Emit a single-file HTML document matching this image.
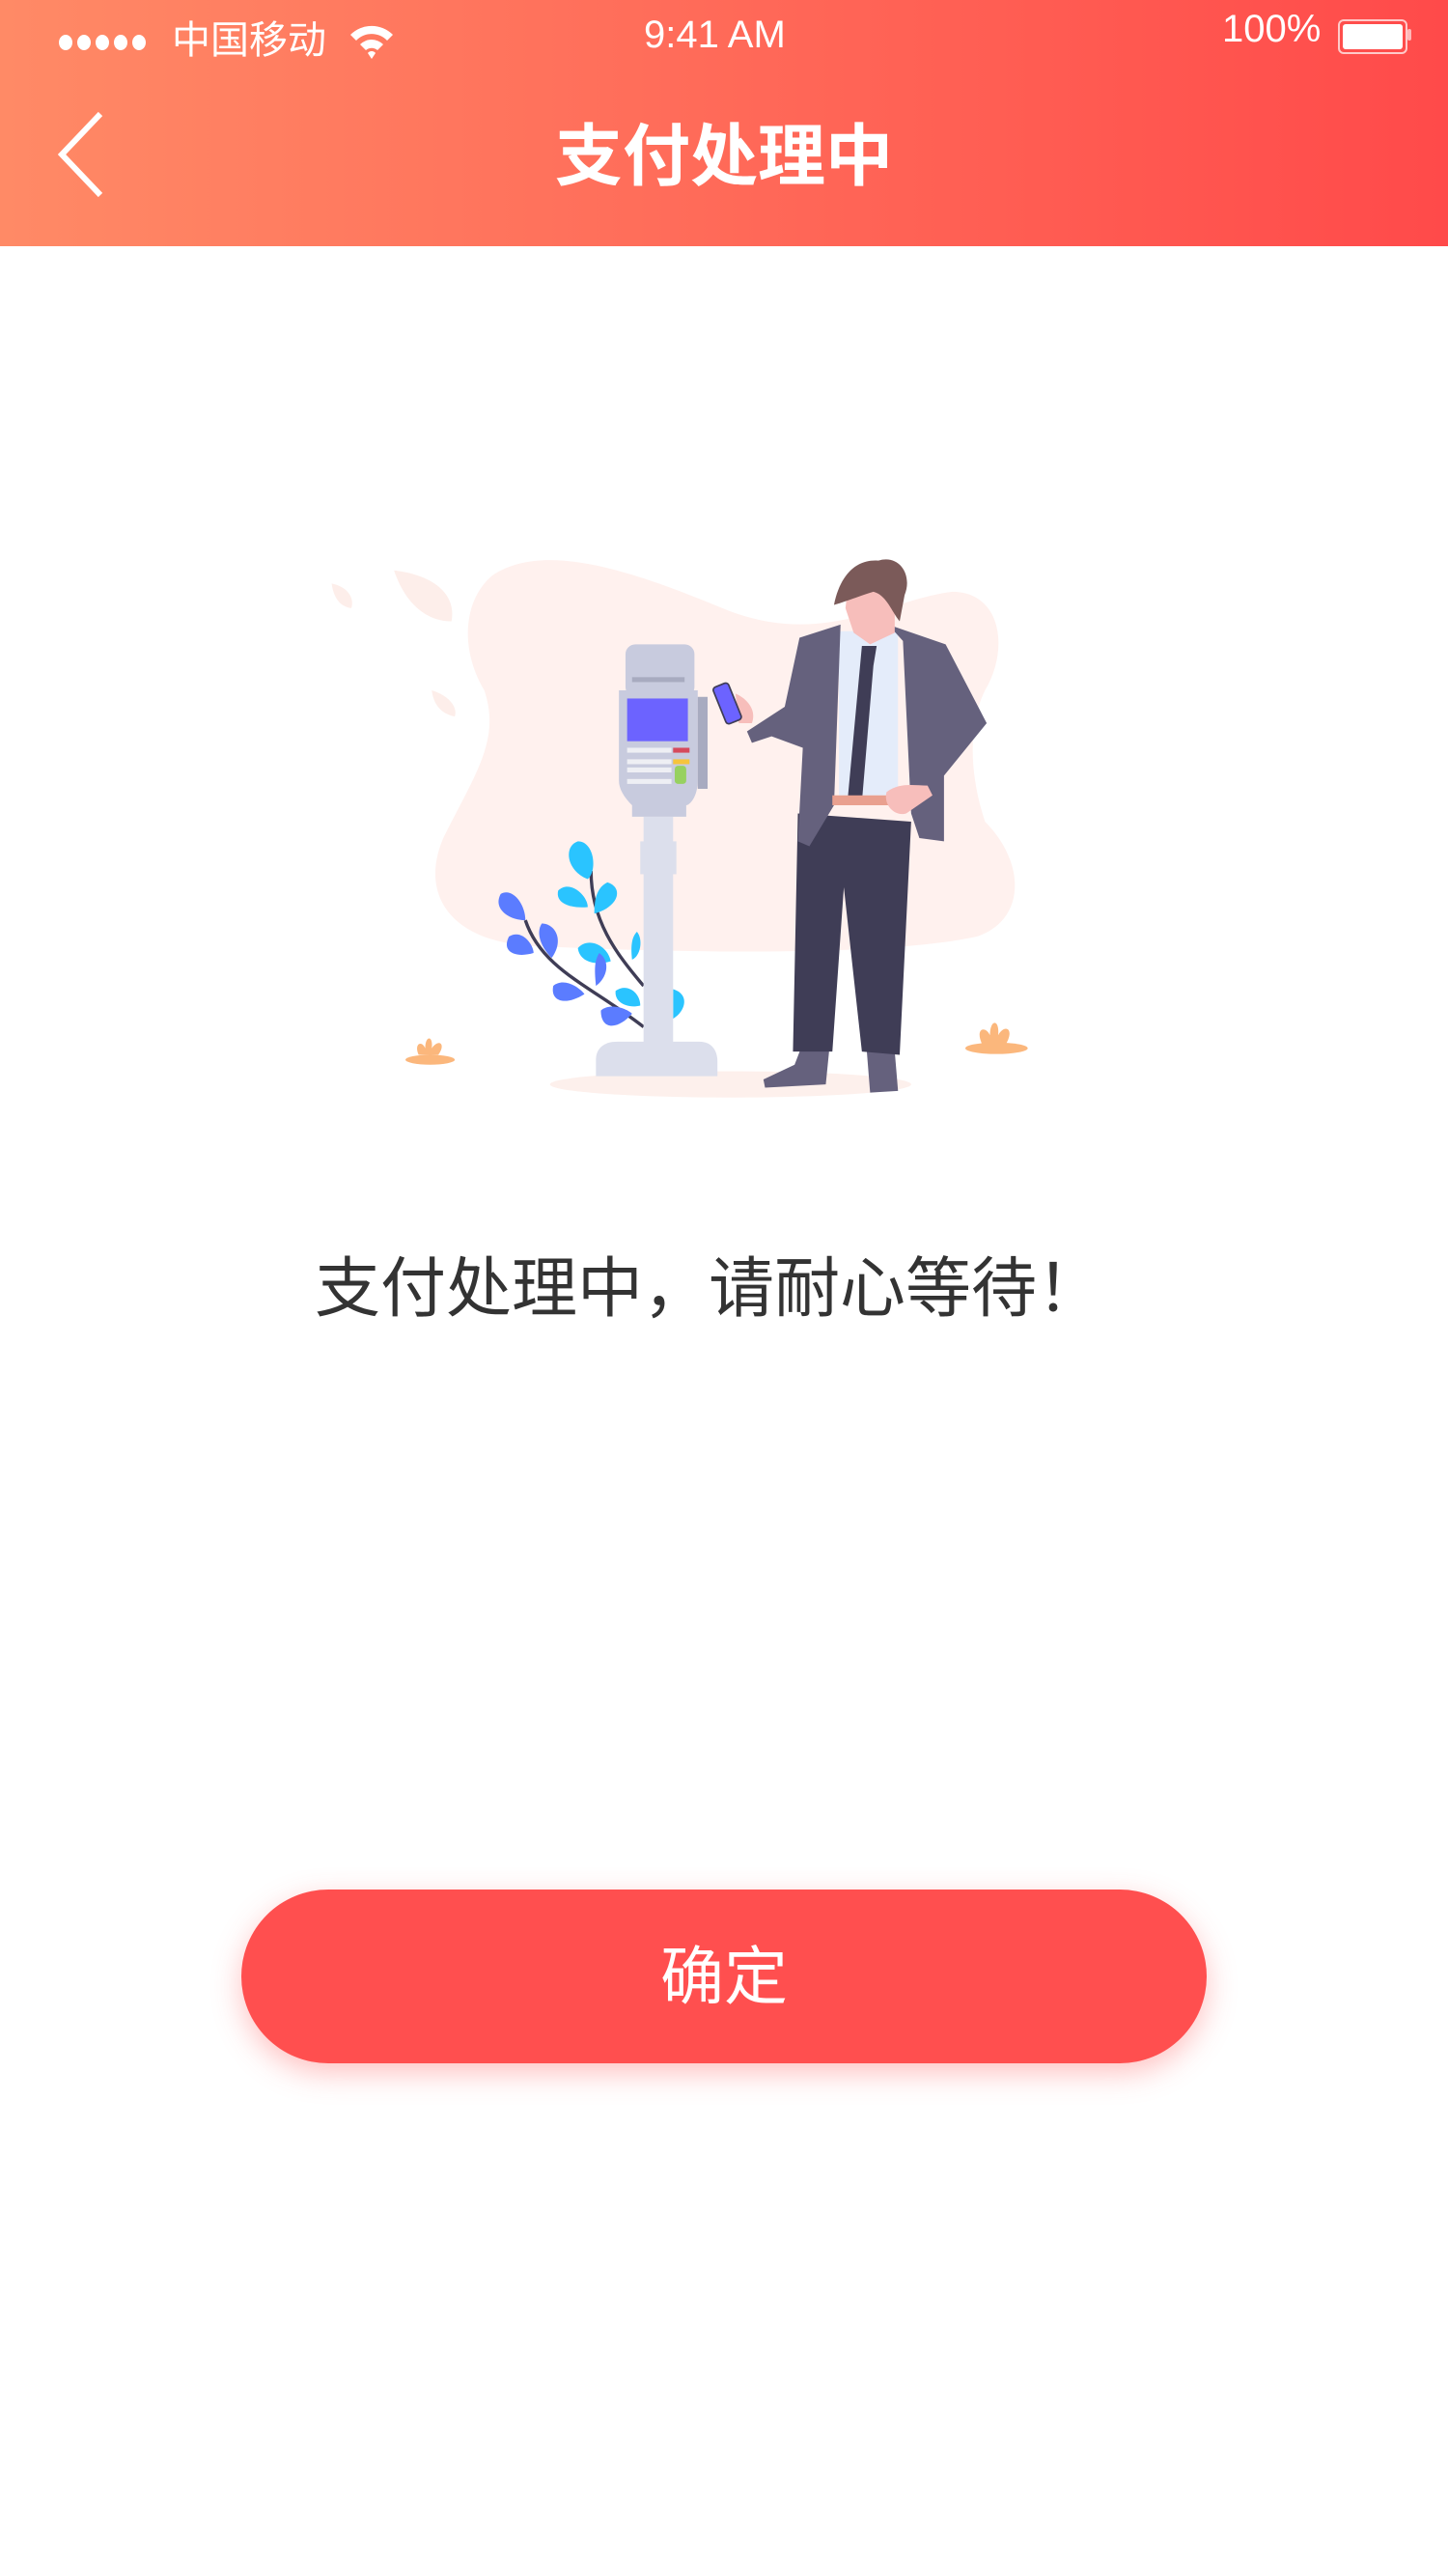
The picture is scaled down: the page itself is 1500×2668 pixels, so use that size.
<!DOCTYPE html>
<html><head><meta charset="utf-8">
<style>
html,body{margin:0;padding:0;}
body{width:1500px;height:2668px;position:relative;background:#fff;overflow:hidden;font-family:"Liberation Sans","Noto Sans CJK SC",sans-serif;}
.hdr{position:absolute;left:0;top:0;width:1500px;height:255px;background:linear-gradient(90deg,#ff8a66 0%,#ff6d5a 45%,#ff4a4a 100%);color:#fff;}
.sb{position:absolute;top:14px;font-size:40px;line-height:48px;}
.title{position:absolute;left:0;right:0;top:120px;text-align:center;font-size:70px;line-height:84px;font-weight:bold;}
.msg{position:absolute;left:0;width:1468px;top:1292px;text-align:center;font-size:68px;line-height:86px;color:#333;}
.btn{position:absolute;left:250px;top:1957px;width:1000px;height:180px;border-radius:90px;background:#ff4f4f;color:#fff;text-align:center;font-size:66px;line-height:180px;box-shadow:0 10px 30px rgba(255,79,79,0.35);}
</style></head><body>
<div class="hdr">
  <div class="sb" style="left:60px;top:22px;">
    <svg width="100" height="40" viewBox="0 0 100 40"><g fill="#fff"><ellipse cx="8" cy="22" rx="7" ry="8"/><ellipse cx="27" cy="22" rx="7" ry="8"/><ellipse cx="46" cy="22" rx="7" ry="8"/><ellipse cx="65" cy="22" rx="7" ry="8"/><ellipse cx="84" cy="22" rx="7" ry="8"/></g></svg>
  </div>
  <div class="sb" style="left:178px;top:18px;">中国移动</div>
  <svg style="position:absolute;left:360px;top:22px" width="50" height="40" viewBox="0 0 50 40"><path d="M3 14 A31 31 0 0 1 47 14 L41 20 A22 22 0 0 0 9 20Z" fill="#fff"/><path d="M13 24 A17 17 0 0 1 37 24 L31 30 A9 9 0 0 0 19 30Z" fill="#fff"/><path d="M21 33 L25 39 L29 33 A5 5 0 0 0 21 33Z" fill="#fff"/></svg>
  <div class="sb" style="left:667px;top:12px;">9:41 AM</div>
  <div class="sb" style="left:1266px;top:6px;">100%</div>
  <div style="position:absolute;left:1386px;top:20px;width:68px;height:32px;border:2px solid rgba(255,255,255,0.7);border-radius:6px;"></div>
  <div style="position:absolute;left:1391px;top:25px;width:62px;height:26px;background:#fff;border-radius:3px;"></div>
  <div style="position:absolute;left:1458px;top:30px;width:4px;height:12px;background:rgba(255,255,255,0.6);border-radius:2px;"></div>
  <svg style="position:absolute;left:56px;top:114px" width="56" height="92" viewBox="0 0 56 92"><path d="M48 4 L8 46 L48 88" fill="none" stroke="#fff" stroke-width="6"/></svg>
  <div class="title">支付处理中</div>
</div>

<svg style="position:absolute;left:0;top:0" width="1500" height="2668" viewBox="0 0 882 1568">
  <path d="M300 350 C330 330 380 345 440 370 C500 395 540 365 580 360 C610 360 615 395 600 420 C590 440 590 470 600 500 C625 525 625 560 595 570 C540 582 420 580 330 576 C275 575 255 545 270 510 C290 470 305 450 295 420 C280 395 282 365 300 350Z" fill="#fff1ee"/>
  <path d="M240 347 C265 350 278 362 275 378 C258 378 246 365 240 347Z" fill="#fdeeea"/>
  <path d="M202 355 C212 357 216 364 214 370 C206 369 203 362 202 355Z" fill="#fdeeea"/>
  <path d="M263 420 C273 423 279 430 277 436 C268 434 264 428 263 420Z" fill="#fdeeea"/>
  <ellipse cx="445" cy="660" rx="110" ry="8" fill="#fdf0ec"/>
  <ellipse cx="262" cy="645" rx="15" ry="3" fill="#fbb77c"/>
  <path d="M255 642 C252 635 257 633 259 638 C259 630 264 630 263 638 C267 632 272 635 267 642Z" fill="#fbb77c"/>
  <ellipse cx="607" cy="638" rx="19" ry="3.5" fill="#fbb77c"/>
  <path d="M598 635 C594 626 600 624 603 630 C603 620 609 620 608 630 C612 623 618 626 613 635Z" fill="#fbb77c"/>
  <g fill="none" stroke="#3f3d56" stroke-width="2"><path d="M360 530 C360 560 375 580 392 600"/><path d="M320 560 C330 590 360 600 392 625"/></g>
  <g fill="#2ac4ff">
    <path d="M352 512 C362 512 364 530 358 535 C345 530 343 515 352 512Z"/>
    <path d="M340 542 C347 535 358 545 358 552 C348 553 338 550 340 542Z"/>
    <path d="M370 537 C380 540 377 552 362 556 C362 546 364 540 370 537Z"/>
    <path d="M352 577 C358 570 370 575 372 585 C362 588 353 585 352 577Z"/>
    <path d="M388 567 C392 572 390 582 385 584 C384 575 385 570 388 567Z"/>
    <path d="M375 603 C382 598 390 604 390 612 C382 614 374 610 375 603Z"/>
    <path d="M410 602 C420 605 418 615 410 620Z"/>
  </g>
  <g fill="#5b7cff">
    <path d="M305 544 C312 540 320 550 320 560 C310 560 300 553 305 544Z"/>
    <path d="M310 570 C318 565 325 575 325 580 C315 583 305 580 310 570Z"/>
    <path d="M330 562 C338 562 344 572 336 583 C330 577 326 568 330 562Z"/>
    <path d="M337 600 C343 595 352 600 356 605 C345 612 335 610 337 600Z"/>
    <path d="M365 580 C372 585 370 595 363 600 C362 590 362 585 365 580Z"/>
    <path d="M366 615 C372 610 382 614 385 617 C376 627 366 627 366 615Z"/>
  </g>
  <rect x="392" y="497" width="18" height="140" fill="#dcdfec"/>
  <rect x="390" y="512" width="22" height="20" fill="#dcdfec"/>
  <path d="M363 655 L363 645 C363 638 368 634 376 634 L426 634 C434 634 437 640 437 646 L437 655Z" fill="#dcdfec"/>
  <rect x="381" y="392" width="42" height="32" rx="6" fill="#c8cbde"/>
  <path d="M377 420 L425 420 L425 475 C425 485 420 490 418 490 L418 497 L385 497 L385 490 C380 485 377 480 377 475Z" fill="#c8cbde"/>
  <rect x="425" y="424" width="6" height="56" fill="#a8abc0"/>
  <rect x="385" y="412" width="32" height="3" fill="#a8abc0"/>
  <rect x="382" y="425" width="37" height="26" fill="#6c63ff"/>
  <g fill="#eeeff4"><rect x="382" y="455" width="27" height="3"/><rect x="382" y="462" width="27" height="3"/><rect x="382" y="467" width="27" height="3"/><rect x="382" y="474" width="27" height="3"/></g>
  <rect x="410" y="455" width="10" height="3" fill="#d64a5c"/>
  <rect x="410" y="462" width="10" height="3" fill="#f6c43c"/>
  <rect x="411" y="466" width="7" height="11" rx="2" fill="#97d160"/>
  <path d="M489 635 L484 648 L465 657 L466 662 L503 660 L505 640Z" fill="#65617d"/>
  <path d="M528 640 L530 665 L547 664 L545 640Z" fill="#65617d"/>
  <path d="M486 495 L483 640 L507 640 L514 540 L525 640 L548 642 L555 500Z" fill="#3f3d56"/>
  <rect x="511" y="384" width="36" height="100" fill="#e4ecfa"/>
  <path d="M487 388 L512 380 L508 490 L493 515 L486 512 L489 455 L470 448 L458 452 L455 445 L478 430Z" fill="#65617d"/>
  <path d="M541 380 L576 392 L601 440 L575 472 L575 512 L560 510 L555 495 L550 390Z" fill="#65617d"/>
  <path d="M525 393 L534 393 L532 405 L525 488 L516 490Z" fill="#3f3d56"/>
  <path d="M507 484 L556 484 L556 490 L507 490Z" fill="#e9a08f"/>
  <path d="M540 482 C548 476 556 478 565 478 L568 484 L552 495 C545 497 538 490 540 482Z" fill="#f7bebb"/>
  <path d="M448 422 C455 425 461 432 458 440 L450 440Z" fill="#f7bebb"/>
  <rect x="438" y="416" width="10" height="24" rx="2" transform="rotate(-22 443 428)" fill="#6c63ff" stroke="#3f3d56" stroke-width="1"/>
  <path d="M517 352 C530 350 545 355 545 370 L545 385 L530 392 L520 385 L515 370Z" fill="#f7bebb"/>
  <path d="M508 368 C512 348 523 340 535 341 C548 337 556 350 551 362 L548 378 C543 372 540 362 532 360 C525 362 515 366 508 368Z" fill="#7b5a59"/>
</svg>

<div class="msg">支付处理中，请耐心等待！</div>
<div class="btn">确定</div>
</body></html>
